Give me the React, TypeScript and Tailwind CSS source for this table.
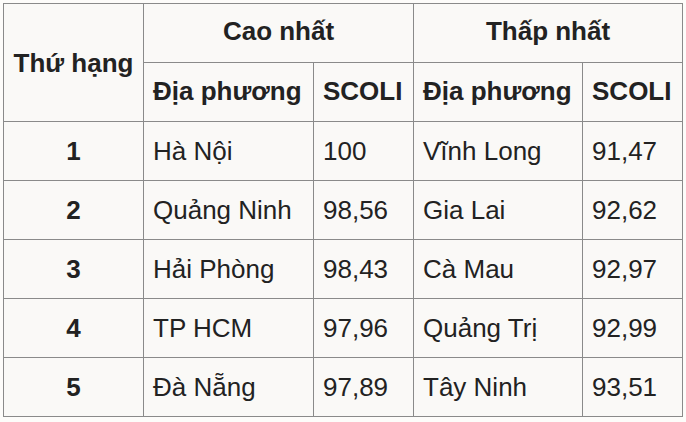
const rows = [
  { rank: 1, highName: "Hà Nội", highScore: "100", lowName: "Vĩnh Long", lowScore: "91,47" },
  { rank: 2, highName: "Quảng Ninh", highScore: "98,56", lowName: "Gia Lai", lowScore: "92,62" },
  { rank: 3, highName: "Hải Phòng", highScore: "98,43", lowName: "Cà Mau", lowScore: "92,97" },
  { rank: 4, highName: "TP HCM", highScore: "97,96", lowName: "Quảng Trị", lowScore: "92,99" },
  { rank: 5, highName: "Đà Nẵng", highScore: "97,89", lowName: "Tây Ninh", lowScore: "93,51" },
];

const cell = "border border-[#8a8a8a] px-[9px] leading-none";

export default function App() {
  return (
    <div className="w-[686px] h-[422px] bg-[#fdfcfa] pt-[3px] pl-[3px] font-['Liberation_Sans',Arial,sans-serif] text-[26px] text-[#222]">
      <table className="border-collapse bg-[#faf9f7] table-fixed w-[679px]">
        <colgroup>
          <col className="w-[140px]" />
          <col className="w-[170px]" />
          <col className="w-[100px]" />
          <col className="w-[169px]" />
          <col className="w-[100px]" />
        </colgroup>
        <thead>
          <tr className="h-[59px]">
            <th rowSpan={2} className={`${cell} text-center font-bold`}>
              Thứ hạng
            </th>
            <th colSpan={2} className={`${cell} pb-[5px] text-center font-bold`}>
              Cao nhất
            </th>
            <th colSpan={2} className={`${cell} pb-[5px] text-center font-bold`}>
              Thấp nhất
            </th>
          </tr>
          <tr className="h-[59px]">
            <th className={`${cell} pb-[2px] text-left font-bold`}>Địa phương</th>
            <th className={`${cell} pb-[2px] text-left font-bold`}>SCOLI</th>
            <th className={`${cell} pb-[2px] text-left font-bold`}>Địa phương</th>
            <th className={`${cell} pb-[2px] text-left font-bold`}>SCOLI</th>
          </tr>
        </thead>
        <tbody>
          {rows.map((r) => (
            <tr key={r.rank} className="h-[59px]">
              <td className={`${cell} text-center font-bold`}>{r.rank}</td>
              <td className={cell}>{r.highName}</td>
              <td className={cell}>{r.highScore}</td>
              <td className={cell}>{r.lowName}</td>
              <td className={cell}>{r.lowScore}</td>
            </tr>
          ))}
        </tbody>
      </table>
    </div>
  );
}
